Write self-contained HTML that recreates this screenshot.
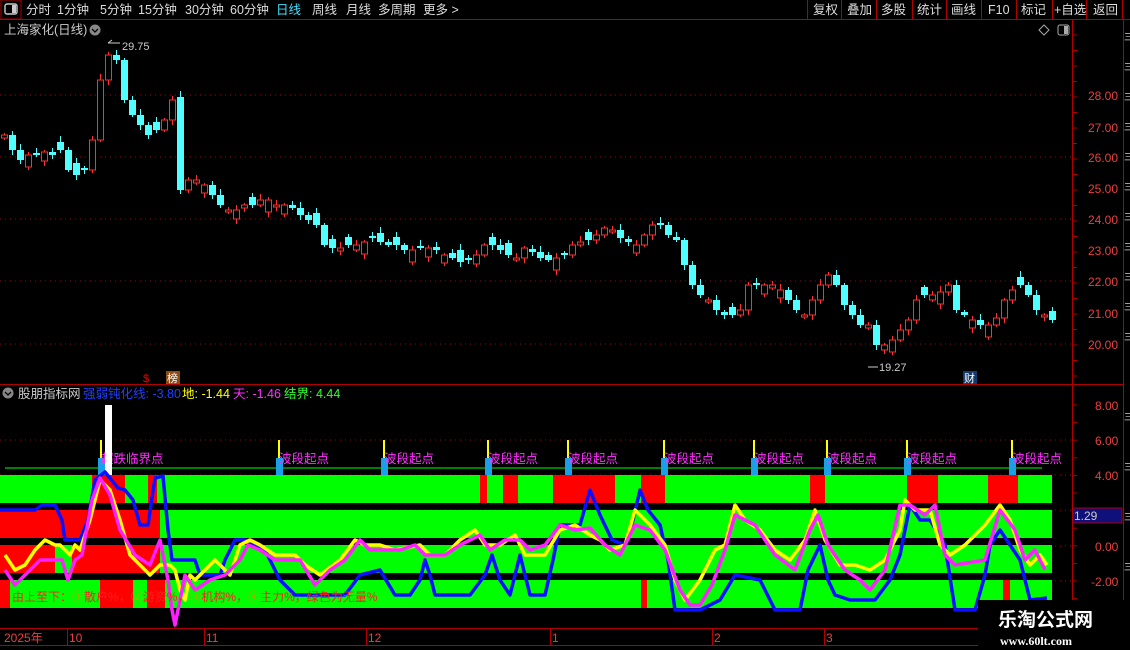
<!DOCTYPE html>
<html><head><meta charset="utf-8">
<style>
html,body{margin:0;padding:0;background:#000;width:1130px;height:650px;overflow:hidden;font-family:"Liberation Sans","Noto Sans CJK SC",sans-serif}
svg{position:absolute;left:0;top:0}
</style></head><body>
<svg id="s" width="1130" height="650" viewBox="0 0 1130 650" font-family="Liberation Sans, Noto Sans CJK SC, sans-serif">
<rect width="1130" height="650" fill="#000"/>
<line x1="0" y1="19.5" x2="1130" y2="19.5" stroke="#b00000"/>
<rect x="1" y="0" width="20" height="19" fill="none" stroke="#b00000"/>
<rect x="5" y="4" width="12" height="10" rx="2" fill="none" stroke="#ccc" stroke-width="1.4"/><rect x="12" y="5" width="4" height="8" fill="#ccc"/>
<g font-size="12.5" fill="#ddd">
<text x="26" y="14">分时</text><text x="57" y="14">1分钟</text><text x="100" y="14">5分钟</text><text x="138" y="14">15分钟</text><text x="185" y="14">30分钟</text><text x="230" y="14">60分钟</text>
<text x="276" y="14" fill="#40e0ff">日线</text><text x="312" y="14">周线</text><text x="346" y="14">月线</text><text x="378" y="14">多周期</text><text x="423" y="14">更多 &gt;</text>
<text x="813" y="14">复权</text><text x="847" y="14">叠加</text><text x="881" y="14">多股</text><text x="917" y="14">统计</text><text x="951" y="14">画线</text><text x="988" y="14">F10</text><text x="1021" y="14">标记</text><text x="1054" y="14">+自选</text><text x="1093" y="14">返回</text>
</g>
<g stroke="#b00000"><line x1="807.5" y1="0" x2="807.5" y2="19"/><line x1="841.5" y1="0" x2="841.5" y2="19"/><line x1="876.5" y1="0" x2="876.5" y2="19"/><line x1="912.5" y1="0" x2="912.5" y2="19"/><line x1="946.5" y1="0" x2="946.5" y2="19"/><line x1="981.5" y1="0" x2="981.5" y2="19"/><line x1="1016.5" y1="0" x2="1016.5" y2="19"/><line x1="1052.5" y1="0" x2="1052.5" y2="19"/><line x1="1086.5" y1="0" x2="1086.5" y2="19"/><line x1="1122.5" y1="0" x2="1122.5" y2="19"/>
<line x1="1072.5" y1="20" x2="1072.5" y2="628"/><line x1="1123.5" y1="20" x2="1123.5" y2="650"/>
<line x1="0" y1="384.5" x2="1123" y2="384.5"/><line x1="0" y1="628.5" x2="1123" y2="628.5"/><line x1="0" y1="645.5" x2="1123" y2="645.5"/></g>
<text x="4" y="34" font-size="12.5" fill="#ccc">上海家化(日线)</text>
<circle cx="95" cy="30" r="5.5" fill="#888"/><path d="M92 29l3 3 3-3" stroke="#000" stroke-width="1.3" fill="none"/>
<path d="M1044 25l5 5-5 5-5-5z" fill="none" stroke="#aaa"/>
<rect x="1058" y="25" width="11" height="10" rx="2" fill="none" stroke="#aaa"/><rect x="1064" y="26" width="4" height="8" fill="#aaa"/>
<g stroke="#a00000" stroke-dasharray="1,4">
<line x1="0" y1="95" x2="1072" y2="95"/><line x1="0" y1="157" x2="1072" y2="157"/><line x1="0" y1="219" x2="1072" y2="219"/><line x1="0" y1="281" x2="1072" y2="281"/><line x1="0" y1="344" x2="1072" y2="344"/>
<line x1="0" y1="440" x2="1072" y2="440"/><line x1="0" y1="475" x2="1072" y2="475"/><line x1="0" y1="510" x2="1072" y2="510"/><line x1="0" y1="546" x2="1072" y2="546"/><line x1="0" y1="581" x2="1072" y2="581"/>
</g>
<g font-size="12" fill="#e84040">
<text x="1088" y="100">28.00</text><text x="1088" y="132">27.00</text><text x="1088" y="162">26.00</text><text x="1088" y="193">25.00</text><text x="1088" y="224">24.00</text><text x="1088" y="255">23.00</text><text x="1088" y="286">22.00</text><text x="1088" y="318">21.00</text><text x="1088" y="349">20.00</text>
<text x="1095" y="410">8.00</text><text x="1095" y="445">6.00</text><text x="1095" y="480">4.00</text><text x="1095" y="551">0.00</text><text x="1091" y="586">-2.00</text>
</g>
<g stroke="#b00000" id="ticks"></g>
<g id="candles"></g>
<text x="122" y="50" font-size="11" fill="#ccc">29.75</text><path d="M108 43l4-3m-4 3h12" stroke="#ccc" fill="none"/>
<text x="879" y="371" font-size="11" fill="#ccc">19.27</text><path d="M868 367h10" stroke="#ccc"/>
<rect x="963" y="371" width="14" height="13" fill="#123a6a"/><text x="964" y="382" font-size="11" fill="#fff">财</text>
<text x="143" y="382" font-size="11" fill="#e00">$</text>
<rect x="166" y="371" width="14" height="13" fill="#8a4a10"/><text x="167" y="382" font-size="11" fill="#fff">榜</text>
<circle cx="8" cy="393" r="5.5" fill="#888"/><path d="M5 392l3 3 3-3" stroke="#000" stroke-width="1.3" fill="none"/>
<g font-size="12.5"><text x="18" y="398" fill="#ccc">股朋指标网</text><text x="83" y="398" fill="#2040ff">强弱钝化线: -3.80</text><text x="182" y="398" fill="#ffff00">地: -1.44</text><text x="233" y="398" fill="#ff30ff">天: -1.46</text><text x="284" y="398" fill="#30ff30">结界: 4.44</text></g>
<g id="bands"></g>
<line x1="5" y1="468" x2="1042" y2="468" stroke="#00ff00"/>
<g id="marks"></g>
<rect x="105" y="405" width="7" height="70" fill="#fff"/>
<g fill="none" stroke-width="3.5" stroke-linejoin="round">
<polyline stroke="#0a10ff" points="0,510 35,510 42,505 55,505 62,520 65,540 80,540 88,520 95,480 105,472 118,488 125,490 133,500 140,525 148,525 155,478 163,476 168,530 172,560 195,560 200,575 220,575 225,560 235,540 245,540 255,545 265,550 280,580 295,595 320,595 345,595 360,575 380,570 395,595 410,595 420,580 425,560 430,575 435,595 470,595 485,575 492,555 500,580 510,595 520,555 530,595 545,595 553,560 560,525 580,525 590,490 600,515 612,540 625,545 633,520 640,490 648,510 660,525 668,560 675,610 700,610 720,600 735,575 760,580 775,610 800,610 808,570 820,545 828,580 835,595 850,600 875,600 890,580 900,555 910,505 920,520 930,520 945,545 955,610 975,610 985,575 990,545 1000,530 1010,545 1020,560 1030,600 1047,598"/>
<polyline stroke="#ffff00" points="5,555 15,570 25,565 35,550 45,540 55,545 60,545 70,555 75,545 80,550 90,520 100,480 110,490 120,520 130,555 150,575 160,565 170,565 175,570 180,590 185,600 190,575 195,580 205,570 215,560 230,575 240,545 250,540 260,545 275,555 295,555 305,565 320,575 340,560 355,540 365,545 380,545 395,550 420,545 430,555 445,555 460,540 475,530 485,545 500,545 515,535 525,555 545,555 560,530 575,525 590,535 600,540 610,550 625,545 635,510 650,525 665,545 675,580 685,600 700,580 715,550 725,545 735,505 745,520 760,530 775,550 790,560 805,540 815,510 825,540 840,565 855,565 870,570 885,560 900,530 905,500 915,510 930,510 940,545 950,555 965,545 975,535 985,525 1000,505 1010,520 1020,550 1030,565 1040,555 1047,565"/>
<polyline stroke="#ff20ff" points="5,570 15,585 25,575 40,560 55,560 62,560 68,580 75,560 82,555 92,500 100,478 110,495 120,530 135,555 150,565 160,540 168,580 172,610 175,625 180,600 185,575 195,590 210,580 225,575 240,560 248,545 260,550 275,560 300,560 315,585 330,570 345,560 360,540 370,550 400,550 415,545 425,555 445,555 460,545 480,535 490,550 505,540 520,540 530,550 545,545 560,525 575,530 590,528 605,545 620,555 635,525 650,530 665,550 680,590 690,605 700,605 712,585 725,550 735,515 745,520 755,525 775,555 795,570 810,530 818,515 828,545 845,570 860,580 870,590 885,570 900,505 910,505 925,515 935,505 945,555 955,565 985,560 1000,510 1015,530 1025,560 1035,550 1045,570"/>
</g>
<text x="12" y="601" font-size="12" fill="#ff2020">由上至下：<tspan fill="#c8a000">①</tspan>散户%，<tspan fill="#c8a000">②</tspan>游资%，<tspan fill="#c8a000">③</tspan>机构%，<tspan fill="#c8a000">④</tspan>主力%，绿色为无量%</text>
<rect x="1073" y="508" width="49" height="15" fill="#10107a" stroke="#b00000"/><text x="1074" y="520" font-size="12" fill="#ccc">1.29</text>
<g font-size="12" fill="#e84040"><text x="4" y="642">2025年</text><text x="69" y="642">10</text><text x="206" y="642">11</text><text x="368" y="642">12</text><text x="552" y="642">1</text><text x="714" y="642">2</text><text x="826" y="642">3</text></g>
<g stroke="#b00000"><line x1="67.5" y1="628" x2="67.5" y2="645"/><line x1="204.5" y1="628" x2="204.5" y2="645"/><line x1="366.5" y1="628" x2="366.5" y2="645"/><line x1="550.5" y1="628" x2="550.5" y2="645"/><line x1="712.5" y1="628" x2="712.5" y2="645"/><line x1="824.5" y1="628" x2="824.5" y2="645"/></g>
<g fill="#ccc" font-size="9"><text x="1124" y="40">三</text><text x="1124" y="70">三</text><text x="1124" y="100">三</text><text x="1124" y="130">三</text><text x="1124" y="160">三</text><text x="1124" y="190">三</text><text x="1124" y="220">三</text><text x="1124" y="250">三</text><text x="1124" y="280">三</text><text x="1124" y="310">三</text><text x="1124" y="340">三</text><text x="1124" y="420">三</text><text x="1124" y="470">三</text><text x="1124" y="520">三</text><text x="1124" y="570">三</text></g>
<rect x="978" y="600" width="152" height="50" fill="#000"/>
<text x="998" y="626" font-size="19" font-weight="bold" fill="#fff">乐淘公式网</text>
<text x="1000" y="645" font-size="12" font-weight="bold" fill="#fff" font-family="Liberation Serif, serif">www.60lt.com</text>
</svg>
<script>
(function(){
var NS="http://www.w3.org/2000/svg";
function el(p,t,a){var e=document.createElementNS(NS,t);for(var k in a)e.setAttribute(k,a[k]);p.appendChild(e);return e;}
var ys=[135,150,160,155,155,152,155,150,170,175,170,140,80,55,60,100,115,125,135,130,120,100,190,180,180,185,195,205,210,210,205,205,200,200,205,205,208,215,220,225,245,248,248,245,245,242,238,242,245,245,250,250,248,248,250,255,258,262,260,255,245,245,250,255,258,248,252,258,260,258,255,245,242,240,235,228,230,238,242,245,235,225,225,235,240,265,285,295,300,310,315,315,310,285,285,285,285,290,300,310,315,300,285,275,285,305,315,325,325,345,345,340,330,320,300,295,295,292,285,310,315,320,325,325,318,300,290,285,295,310,315,320];
var c=document.getElementById("candles");
for(var i=0;i<ys.length;i++){var x=4+i*8;var o=i?ys[i-1]:ys[0]+5;var cl=ys[i];
 if(i==22)o=97; if(i==12)o=140;
 var up=cl<o;
 if(Math.abs(cl-o)<6){var d=[3,8,5,12,2,9][i%6];up=(i%3!=1)?(cl<=o):!(cl<=o);o=up?cl+d:cl-d;}
 var col=up?"#ff3030":"#50ffff";
 var tp=Math.min(o,cl),bt=Math.max(o,cl);if(bt-tp<1)bt=tp+1;
 var hw=(i*7%5)+2;
 el(c,"line",{x1:x+0.5,y1:tp-hw,x2:x+0.5,y2:bt+((i*3)%4)+2,stroke:col});
 if(up)el(c,"rect",{x:x-2.5,y:tp,width:6,height:bt-tp,fill:"#000",stroke:col});
 else el(c,"rect",{x:x-3,y:tp,width:7,height:bt-tp,fill:col});}
var b=document.getElementById("bands");
var rows=[[475,[[92,125],[148,157],[480,487],[503,518],[553,615],[641,665],[810,825],[907,938],[988,1018]]],[510,[[0,160]]],[545,[[0,55],[72,160]]],[580,[[0,10],[100,133],[147,165],[641,647],[1003,1010]]]];
rows.forEach(function(r){el(b,"rect",{x:0,y:r[0],width:1052,height:28,fill:"#00ff00"});r[1].forEach(function(s){el(b,"rect",{x:s[0],y:r[0],width:s[1]-s[0],height:28,fill:"#ff0000"});});});
var m=document.getElementById("marks");
[[100,"超跌临界点"],[278,"波段起点"],[383,"波段起点"],[487,"波段起点"],[567,"波段起点"],[663,"波段起点"],[753,"波段起点"],[826,"波段起点"],[906,"波段起点"],[1011,"波段起点"]].forEach(function(p){
 el(m,"rect",{x:p[0],y:440,width:2,height:18,fill:"#ffff00"});
 el(m,"rect",{x:p[0]-2,y:458,width:7,height:17,fill:"#1aa0e8"});
 var t=el(m,"text",{x:p[0]+1,y:463,"font-size":"12.5",fill:"#ff30ff"});t.textContent=p[1];});
var tk=document.getElementById("ticks");
for(var y=35;y<380;y+=15.5)el(tk,"line",{x1:1072,y1:y,x2:1077,y2:y});
for(var y2=405;y2<628;y2+=17.6)el(tk,"line",{x1:1072,y1:y2,x2:1077,y2:y2});
})();
</script>
</body></html>
